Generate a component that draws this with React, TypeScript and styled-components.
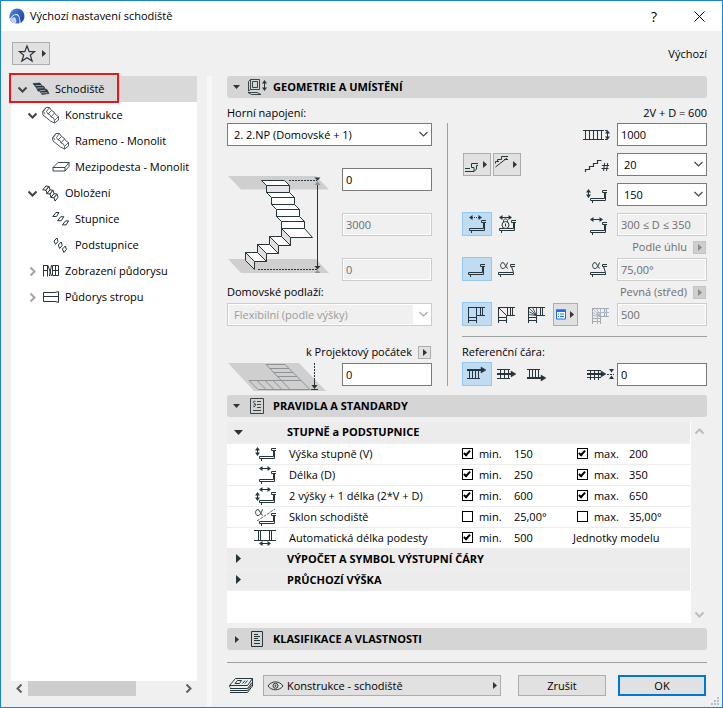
import React from "react";
import styled, { createGlobalStyle, css } from "styled-components";

const ink = "#26343b";
const font = '"Open Sans", "Noto Sans", sans-serif';

const GlobalStyle = createGlobalStyle`
  *, *::before, *::after { box-sizing: border-box; }
  body { margin: 0; background: #f0f0f0; }
  body, button, input, select { font-family: ${font}; font-size: 11px; color: #000; }
`;

/* ---------- window ---------- */

const Window = styled.div`
  display: flex;
  flex-direction: column;
  min-height: 100vh;
  border: 1px solid #1883d7;
  background: #f0f0f0;
  line-height: 16px;
`;

const TitleBar = styled.header`
  display: flex;
  align-items: center;
  height: 30px;
  padding: 0 8px;
  background: #fff;
`;

const Title = styled.h1`
  flex: 1;
  margin: 0 0 0 5px;
  font-size: 11px;
  font-weight: 400;
`;

const TitleButton = styled.button`
  display: grid;
  place-items: center;
  width: 60px;
  height: 28px;
  padding: 0;
  border: 0;
  background: none;
  font-size: 14px;
  &:last-child { width: 30px; }
`;

const Toolbar = styled.div`
  display: flex;
  align-items: center;
  justify-content: space-between;
  height: 45px;
  padding: 0 15px 0 11px;
`;

const FlatButton = styled.button<{ $w?: number; $h?: number; $tight?: boolean }>`
  display: flex;
  flex: none;
  align-items: center;
  justify-content: ${(p) => (p.$tight ? "center" : "space-between")};
  width: ${(p) => p.$w ?? 28}px;
  height: ${(p) => p.$h ?? 23}px;
  padding: ${(p) => (p.$tight ? "0" : "0 3px 0 0")};
  border: 1px solid #adadad;
  background: #e1e1e1;
  svg { flex: none; }
  &:disabled { background: #cfcfcf; border-color: #c4c4c4; }
`;

const Columns = styled.div`
  display: flex;
  flex: 1;
  padding: 0 15px 0 10px;
`;

/* ---------- tree ---------- */

const TreePane = styled.nav`
  position: relative;
  display: flex;
  flex: none;
  flex-direction: column;
  width: 186px;
  margin-bottom: 11px;
`;

const Tree = styled.ul`
  flex: 1;
  margin: 0;
  padding: 0;
  list-style: none;
  background: #fff;
`;

const TreeRow = styled.li<{ $level: number; $selected?: boolean }>`
  display: grid;
  grid-template-columns: 9px 18px 1fr;
  column-gap: 5px;
  align-items: center;
  height: 26px;
  padding-left: ${(p) => 7 + p.$level * 10}px;
  white-space: nowrap;
  background: ${(p) => (p.$selected ? "#d9d9d9" : "transparent")};
`;

const Highlight = styled.div`
  position: absolute;
  left: -2px;
  top: -3px;
  width: 110px;
  height: 30px;
  border: 2px solid #f01418;
  pointer-events: none;
`;

const HScroll = styled.div`
  display: grid;
  grid-template-columns: 17px 1fr 17px;
  align-items: center;
  justify-items: center;
  height: 15px;
`;

const HThumb = styled.div`
  justify-self: start;
  width: 71%;
  height: 15px;
  background: #cdcdcd;
`;

const Splitter = styled.div`
  flex: none;
  width: 5px;
  margin: 0 15px 0 10px;
  background: #f7f7f7;
`;

/* ---------- settings ---------- */

const Main = styled.main`
  display: flex;
  flex: 1;
  flex-direction: column;
  min-width: 0;
`;

const SectionHead = styled.h2`
  display: grid;
  grid-template-columns: 9px 22px 1fr;
  column-gap: 5px;
  align-items: center;
  justify-items: center;
  height: 22px;
  margin: 0;
  padding-left: 5px;
  border-radius: 3px;
  background: #d5d5d5;
  font-size: 11px;
  font-weight: 700;
  span { justify-self: start; }
`;

const Geometry = styled.section`
  display: grid;
  grid-template-columns: 205px 1fr;
  column-gap: 30px;
  padding: 4px 0 9px;
`;

const Column = styled.div`
  display: flex;
  flex-direction: column;
  min-width: 0;
`;

const DividedColumn = styled(Column)`
  position: relative;
  &::before {
    content: "";
    position: absolute;
    left: -15px;
    top: 21px;
    bottom: 0;
    width: 1px;
    background: #a0a0a0;
  }
`;

const Caption = styled.div<{ $end?: boolean; $muted?: boolean }>`
  display: flex;
  align-items: center;
  justify-content: ${(p) => (p.$end ? "flex-end" : "flex-start")};
  gap: 6px;
  height: 22px;
  padding-right: ${(p) => (p.$end ? 1 : 0)}px;
  color: ${(p) => (p.$muted ? "#6d6d6d" : "#000")};
`;

const TopCaption = styled(Caption)`
  height: 21px;
  padding-right: 0;
`;

const boxed = css`
  width: 100%;
  height: 23px;
  border: 1px solid #7a7a7a;
  border-radius: 0;
  background: #fff;
  line-height: 16px;
  &:disabled {
    border-color: #ccc;
    background: #f0f0f0;
    box-shadow: inset 0 0 0 1px #fff;
    color: #6d6d6d;
    opacity: 1;
  }
`;

const Field = styled.input`
  ${boxed}
  padding: 0 3px;
`;

const SelectBox = styled.div`
  position: relative;
  width: 100%;
  svg { position: absolute; right: 4px; top: 8px; pointer-events: none; }
`;

const SelectField = styled.select`
  ${boxed}
  appearance: none;
  padding: 0 22px 0 6px;
  &:disabled {
    color: #9a9a9a;
    background: linear-gradient(to right, #f0f0f0 calc(100% - 18px), #fff 0);
  }
`;

const Row = styled.div<{ $gap?: boolean }>`
  display: flex;
  align-items: flex-end;
  height: 23px;
  margin-top: ${(p) => (p.$gap ? 7 : 0)}px;
`;

const IconCell = styled.span`
  display: flex;
  flex: none;
  margin: 0 2px 0 auto;
`;

const Slot = styled.div`
  flex: none;
  width: 90px;
`;

const Toggle = styled.button<{ $on?: boolean }>`
  display: grid;
  flex: none;
  place-items: center;
  width: 30px;
  height: 24px;
  padding: 0;
  border: 1px solid ${(p) => (p.$on ? "#92c8f2" : "transparent")};
  background: ${(p) => (p.$on ? "#c0dcf3" : "transparent")};
  svg { margin: -1px; }
`;

const Flyouts = styled.div`
  display: flex;
  gap: 2px;
  padding-left: 1px;
`;

const Heights = styled.div`
  display: grid;
  grid-template-columns: 1fr 90px;
  align-items: center;
  margin-top: 22px;
`;

const Stack = styled.div`
  display: grid;
  gap: 22px;
`;

const OriginCaption = styled(Caption)`
  margin-top: 15px;
`;

const OriginRow = styled.div`
  display: grid;
  grid-template-columns: 1fr 90px;
  height: 23px;
`;

const Rule = styled.hr<{ $margin: string }>`
  width: 100%;
  height: 1px;
  margin: ${(p) => p.$margin};
  border: 0;
  background: #a0a0a0;
`;

/* ---------- rules table ---------- */

const RulesBox = styled.div`
  display: flex;
  height: 201px;
  margin: 5px 0;
`;

const TableArea = styled.div`
  flex: 1;
  min-width: 0;
  padding-right: 1px;
  background: #fff;
`;

const Rules = styled.table`
  width: 100%;
  border-collapse: collapse;
  table-layout: fixed;
  tr { height: 21px; }
  td, th { padding: 0; white-space: nowrap; text-align: left; line-height: 16px; border-bottom: 1px solid #ececec; }
  td > svg { display: block; }
`;

const GroupRow = styled.tr`
  background: #ececec;
  th { font-weight: 700; border-bottom-color: #f0f0f0; }
  svg { margin: 0 auto; display: block; }
`;

const CheckLabel = styled.label<{ $indent?: boolean }>`
  display: flex;
  align-items: center;
  gap: 6px;
  padding-left: ${(p) => (p.$indent ? 4 : 0)}px;
`;

const Cell = styled.td<{ $indent: number }>`
  && { padding-left: ${(p) => p.$indent}px; }
`;

const Check = styled.input`
  appearance: none;
  display: grid;
  place-items: center;
  width: 11px;
  height: 11px;
  margin: 0;
  border: 1px solid #000;
  background: #fff;
  &:checked::after {
    content: "";
    width: 4px;
    height: 7px;
    margin-bottom: 2px;
    border: solid #000;
    border-width: 0 2px 2px 0;
    transform: rotate(42deg);
  }
`;

const VScroll = styled.div`
  display: flex;
  flex: none;
  flex-direction: column;
  align-items: center;
  justify-content: space-between;
  width: 16px;
  padding: 5px 0 4px;
`;

/* ---------- footer ---------- */

const Footer = styled.footer`
  display: flex;
  align-items: center;
  margin-bottom: 11px;
`;

const LayerButton = styled.button`
  display: flex;
  flex: 1;
  align-items: center;
  gap: 3px;
  height: 21px;
  margin: 0 17px 0 9px;
  padding: 0 3px 0 3px;
  border: 1px solid #adadad;
  background: #e1e1e1;
  line-height: 16px;
  span { flex: 1; text-align: left; }
`;

const PushButton = styled.button<{ $primary?: boolean }>`
  width: 88px;
  height: 21px;
  padding: 0;
  margin-right: ${(p) => (p.$primary ? 1 : 12)}px;
  border: ${(p) => (p.$primary ? "2px solid #0078d7" : "1px solid #adadad")};
  background: #e1e1e1;
  line-height: 16px;
`;

const Grip = styled.svg`
  position: fixed;
  right: 4px;
  bottom: 3px;
`;

/* ---------- drawings ---------- */

type Kids = { children?: React.ReactNode };

const Svg = ({ w, h, children, color = ink }: Kids & { w: number; h: number; color?: string }) => (
  <svg width={w} height={h} viewBox={`0 0 ${w} ${h}`} fill="none" stroke={color} aria-hidden="true">
    {children}
  </svg>
);

const Chevron = ({ dir, color = "#444" }: { dir: "up" | "down" | "right" | "left"; color?: string }) => {
  const d = {
    down: "M0.5 2.5L4.5 6.5L8.5 2.5",
    up: "M0.5 6.5L4.5 2.5L8.5 6.5",
    right: "M2.5 0.5L6.5 4.5L2.5 8.5",
    left: "M6.5 0.5L2.5 4.5L6.5 8.5",
  }[dir];
  return (
    <Svg w={9} h={9} color={color}>
      <path d={d} strokeWidth="2" />
    </Svg>
  );
};

const SelectChevron = ({ color = "#444" }: { color?: string }) => (
  <Svg w={9} h={7} color={color}>
    <path d="M0.5 1L4.5 5L8.5 1" strokeWidth="1.2" />
  </Svg>
);

const Tri = ({ dir = "right", color = "#333", big }: { dir?: "right" | "down"; color?: string; big?: boolean }) => {
  const long = big ? 9 : 7;
  const short = big ? 5 : 4;
  const [w, h] = dir === "right" ? [short, long] : [long, short];
  return (
    <svg width={w} height={h} viewBox={`0 0 ${w} ${h}`} fill={color} aria-hidden="true">
      <path d={dir === "right" ? `M0 0V${h}L${w} ${h / 2}Z` : `M0 0H${w}L${w / 2} ${h}Z`} />
    </svg>
  );
};

const Step = ({ x, y, tilt }: { x: number; y: number; tilt?: boolean }) => (
  <g transform={`translate(${x} ${y})`}>
    <path d="M17 0.5H12.5V2.5H17" />
    {tilt ? <path d="M13.5 2.5L15.5 8.5V10.5H0.5V8.5H15" /> : <path d="M15.5 2.5V10.5H0.5V8.5H14.5V2.5" />}
    <path d="M2.5 10.5V13" />
  </g>
);

const HArrow = ({ x, y, len, dashed }: { x: number; y: number; len: number; dashed?: boolean }) => (
  <g transform={`translate(${x} ${y})`}>
    <path d={`M3 2.5H${len - 3}`} strokeDasharray={dashed ? "1 1" : undefined} />
    <path d={`M0 2.5L3.5 0V5ZM${len} 2.5L${len - 3.5} 0V5Z`} fill={ink} stroke="none" />
  </g>
);

const VArrow = ({ x, y, len }: { x: number; y: number; len: number }) => (
  <g transform={`translate(${x} ${y})`}>
    <path d={`M2.5 3V${len - 3}`} />
    <path d={`M2.5 0L0 3.5H5ZM2.5 ${len}L0 ${len - 3.5}H5Z`} fill={ink} stroke="none" />
  </g>
);

const Alpha = ({ x, y }: { x: number; y: number }) => (
  <path transform={`translate(${x} ${y})`} d="M7.5 0.5C6 5 4.5 6.5 3 6.5C1.2 6.5 0.6 5 0.6 3.5C0.6 2 1.3 0.6 3 0.6C5 0.6 5.5 6.3 7.8 6.3" />
);

const HeadArrow = ({ x, y }: { x: number; y: number }) => (
  <path d={`M${x} ${y - 3}L${x + 5} ${y}L${x} ${y + 3}Z`} fill={ink} stroke={ink} strokeWidth="0.5" />
);

const Corner = ({ kind }: { kind: "landing" | "diagonal" | "fan" | "faded" }) => (
  <Svg w={30} h={24} color={kind === "faded" ? "#a6a9ab" : ink}>
    <path d="M6 5.5H23M6.5 5V21M14.5 15.5V21M14.5 13.5H23M18.5 5.5V13.500M20.500 5.500V13.500M6.500 15.500H14.500M6.500 18.500H14.500M14.500 13.500V16" />
    {kind === "landing" && <path d="M14.500 5.500V13.500" />}
    {kind === "diagonal" && <path d="M6.500 5.500L14.500 13.500M15.500 5.500V13.500" />}
    {(kind === "fan" || kind === "faded") && (
      <path d="M6.500 5.500L14.500 13.500M10.500 5.500L14.500 13.500M14.500 5.500V13.500M6.500 9.500L14.500 13.500M6.500 12.500L14.500 13.500" strokeWidth="0.8" />
    )}
    {kind === "faded" && <path d="M11.500 21V9.500H23" stroke="#9fb8e8" />}
  </Svg>
);

const Logo = () => (
  <svg width="16" height="16" viewBox="0 0 16 16" aria-hidden="true">
    <defs>
      <linearGradient id="logo" x1="0" y1="0" x2="1" y2="1">
        <stop offset="0" stopColor="#5b95e0" />
        <stop offset="0.5" stopColor="#2f5fbe" />
        <stop offset="1" stopColor="#1f3f92" />
      </linearGradient>
    </defs>
    <path d="M0.5 11C0 5 3 0.6 8.200 0.500C13 0.600 16 4.500 15.400 9.500C15 12 13.500 14 11.500 15C11.500 10 10 6 7.500 6C4.500 6 2.500 8.500 0.500 11Z" fill="url(#logo)" />
    <path d="M1 11.800C3 8.500 5 6.900 7.200 7C10 7.300 10.900 11.500 10.500 15.300C6.500 16 2.500 15 1 11.800Z" fill="#3d6cc8" />
    <path d="M1 11.800C2.500 9.500 4.500 8.600 6 9.500C7.500 10.500 7.500 13.500 7 15.600C4 15.300 2 14 1 11.800Z" fill="#c3d1ea" />
  </svg>
);

const repeat = (n: number, dx: number, dy: number, d: string, fill: string) =>
  Array.from({ length: n }, (_, i) => <path key={i} transform={`translate(${i * dx} ${i * dy})`} d={d} fill={fill} />);

const StairIcon = () => (
  <Svg w={18} h={14}>
    <path d="M1 1.500L8 1L10 4L12 4.500L13 7L15 7.500L17 11.500L10 12.500L8 9.500L6 9L4.500 6Z" fill={ink} strokeWidth="0.6" />
    <path d="M3.500 3.500L9 3.500M5 6L11.500 5.800M7.500 8.800L13.500 8.200M9 10.800H15.500" stroke="#d9d9d9" strokeWidth="0.7" />
  </Svg>
);

const ConcreteIcon = () => (
  <Svg w={18} h={18} color="#4a555b">
    <path d="M0.5 5.500L4 1.500H7.500L9.500 4.500L12 6L13.500 8.500L16.500 10.500V14L12.500 17L8.500 15L1 9Z" fill="#fff" />
    <path d="M7.500 1.500L4.500 5.500L6 8L9.500 4.500M6 8L8 8.500L9 11L12.500 7M9 11L11.500 12L12.500 14.500L16.500 10.500M12.500 14.500V17M4 1.500L1.500 5.500L3 8" strokeWidth="0.9" />
  </Svg>
);

const SlabIcon = () => (
  <Svg w={18} h={16}>
    <path d="M1 8.500L6 3.500H17L13 8.500ZM1 8.500V12H13V8.500M13 12L17 7.500V3.500" strokeWidth="0.9" />
  </Svg>
);

const CladdingIcon = () => (
  <Svg w={18} h={17}>
    {repeat(3, 4, 3.8, "M0.700 4.800L4 1L7 1.500L4 5.200Z", "#fff")}
    {repeat(3, 4, 3.8, "M4 5.200L7 1.500L8 4.800L5 8.500Z", "#fff")}
  </Svg>
);

const TreadsIcon = () => <Svg w={18} h={16}>{repeat(3, 4.8, 4.2, "M0.800 5.500L4 1.500H7L4.500 5.500Z", "none")}</Svg>;

const RisersIcon = () => <Svg w={18} h={17}>{repeat(3, 4.2, 4, "M2 4L5 1L6 4.500L3.500 7.500Z", "none")}</Svg>;

const PlanIcon = () => (
  <Svg w={18} h={14}>
    <path d="M1.500 1V12.500M5.500 1V12.500M1 6.500H6M6 1.500L9.500 12M9.500 1L7.500 12M10.500 1.500H16.500V11.500H10.500ZM13.500 1V12M10.500 6.500H16.500M1.500 1.500H5.500" />
  </Svg>
);

const CeilingIcon = () => (
  <Svg w={18} h={14}>
    <path d="M1.500 2.500H13L16.500 1.500V12.500L13 11.500H1.500ZM1.500 6.500H16" />
  </Svg>
);

const StairDiagram = () => (
  <svg width="103" height="100" viewBox="0 0 103 100" fill="#fff" stroke={ink} strokeLinejoin="round" aria-hidden="true">
    <path d="M1 1H89L102 14.500H14Z" fill="#cfcfcf" stroke="none" />
    <path d="M1 84H89L102 98H14Z" fill="#cfcfcf" stroke="none" />
    <path d="M34.500 5.500H57.500L62.500 10.500H39.500Z" />
    <path d="M39.500 10.500H62.500V17.500H39.500Z" fill="#e6e4ec" />
    <path d="M39.500 17.500H62.500L67.500 22.500H44.500Z" />
    <path d="M44.500 22.500H67.500V29.500H44.500Z" />
    <path d="M44.500 29.500H67.500L72.500 34.500H49.500Z" />
    <path d="M49.500 34.500H72.500V41.500H49.500Z" />
    <path d="M49.500 41.500H72.500L77.500 46.500H54.500Z" />
    <path d="M54.500 46.500H77.500V53.500H54.500Z" />
    <path d="M54.500 53.500H77.500L85.500 62.500H63.500Z" />
    <path d="M42.500 61.500H54.500L63.500 70.500H51.500ZM30.500 69.500H42.500L51.500 78.500H39.500ZM18.500 77.500H30.500L39.500 86.500H27.500Z" />
    <path d="M54.500 53.500V61.500L63.500 70.500V62.500ZM42.500 61.500V69.500L51.500 78.500V70.500ZM30.500 69.500V77.500L39.500 86.500V78.500ZM18.500 77.500V85.500L27.500 94.500V86.500Z" fill="#e0e0e0" />
    <path d="M62 5.500H90M31 94.500H90" strokeDasharray="2 1" fill="none" />
    <path d="M90.500 9V92" />
    <path d="M87.500 2.500H93.500L90.500 5.500ZM87.500 91H93.500L90.500 94.500Z" fill={ink} stroke="none" />
    <path d="M87.500 10H93.500L90.500 6ZM87.500 98H93.500L90.500 95Z" fill="#8d9296" stroke="none" />
  </svg>
);

const OriginDiagram = () => (
  <svg width="103" height="28" viewBox="0 0 103 28" fill="none" stroke="#8d9296" aria-hidden="true">
    <path d="M1 0H72L99 28H27Z" fill="#cfcfcf" stroke="none" />
    <path d="M39 1.500H58L83 26.500H31L22 17.500H74M39 1.500L63 26.500M43 5.500H62M47 9.500H66M51 13.500H70" />
    <path d="M30 17.500L39 26.500M38 17.500L47 26.500M46 17.500L55 26.500" />
    <path d="M87.500 0V15" stroke={ink} strokeDasharray="2 1" />
    <path d="M87.500 15V24M84 26.500H91" stroke={ink} />
    <path d="M84.500 22H90.500L87.500 26Z" fill={ink} stroke="none" />
  </svg>
);

const WidthIcon = () => (
  <Svg w={32} h={22}>
    <path d="M0 6.500H19M0 15.500H19M2.500 6V16M6.500 6V16M10.500 6V16M14.500 6V16M18.500 6V16" />
    <path d="M19 6.500H24M19 15.500H24" strokeDasharray="2 1" />
    <VArrow x={22} y={6} len={10} />
  </Svg>
);

const CountIcon = () => (
  <Svg w={32} h={22}>
    <path d="M2.500 18V15.500H6.500V12.500H10.500V9.500H14.500V6.500H18.500" strokeWidth="1.200" />
    <path d="M20.500 17L21.700 9M23.500 17L24.700 9M19 11.500H26M18.500 14.500H25.500" />
  </Svg>
);

const HeightIcon = () => (
  <Svg w={32} h={22}>
    <VArrow x={3} y={5} len={9} />
    <Step x={7} y={6} />
  </Svg>
);

const DepthIcon = () => (
  <Svg w={32} h={22}>
    <HArrow x={7} y={3} len={13} />
    <Step x={7} y={8} />
  </Svg>
);

const AngleIcon = () => (
  <Svg w={32} h={22}>
    <Alpha x={9} y={3} />
    <Step x={7} y={5} tilt />
  </Svg>
);

const FadedCorner = () => (
  <svg width="32" height="22" viewBox="-3 1 32 22" fill="none" aria-hidden="true">
    <Corner kind="faded" />
  </svg>
);

const OffsetIcon = () => (
  <Svg w={32} h={22}>
    <path d="M4 6.500H18M4 13.500H18M7.500 6V16M11.500 6V16M15.500 6V16" />
    <path d="M4 10H18" strokeWidth="2" />
    <HeadArrow x={18} y={10} />
    <path d="M24 10.500H31" strokeDasharray="2 1" />
    <path d="M26 5H31L28.500 8.500ZM26 15H31L28.500 11.500Z" fill={ink} stroke="none" />
  </Svg>
);

const RefIcon = ({ pos }: { pos: "top" | "mid" | "bottom" }) => (
  <Svg w={30} h={24}>
    {pos === "top" && (
      <>
        <path d="M5 16.500H18M7.500 8V16M10.500 8V16M13.500 8V16M16.500 8V16" />
        <path d="M5 8H20" strokeWidth="2" />
        <HeadArrow x={19} y={8} />
      </>
    )}
    {pos === "mid" && (
      <>
        <path d="M5 7.500H18M5 16.500H18M8.500 7V17M12.500 7V17M16.500 7V17" />
        <path d="M5 12H20" strokeWidth="2" />
        <HeadArrow x={19} y={12} />
      </>
    )}
    {pos === "bottom" && (
      <>
        <path d="M5 7.500H18M7.500 7V16M10.500 7V16M13.500 7V16M16.500 7V16" />
        <path d="M5 16H20" strokeWidth="2" />
        <HeadArrow x={19} y={16} />
      </>
    )}
  </Svg>
);

/* ---------- data ---------- */

type TreeItem = { label: string; level: number; state?: "open" | "closed"; icon: React.ReactNode };

const tree: TreeItem[] = [
  { label: "Schodiště", level: 0, state: "open", icon: <StairIcon /> },
  { label: "Konstrukce", level: 1, state: "open", icon: <ConcreteIcon /> },
  { label: "Rameno - Monolit", level: 2, icon: <ConcreteIcon /> },
  { label: "Mezipodesta - Monolit", level: 2, icon: <SlabIcon /> },
  { label: "Obložení", level: 1, state: "open", icon: <CladdingIcon /> },
  { label: "Stupnice", level: 2, icon: <TreadsIcon /> },
  { label: "Podstupnice", level: 2, icon: <RisersIcon /> },
  { label: "Zobrazení půdorysu", level: 1, state: "closed", icon: <PlanIcon /> },
  { label: "Půdorys stropu", level: 1, state: "closed", icon: <CeilingIcon /> },
];

type RuleItem = { label: string; icon: React.ReactNode; on: boolean; min: string; max?: string };

const rules: RuleItem[] = [
  { label: "Výška stupně (V)", on: true, min: "150", max: "200", icon: <Svg w={22} h={16}><VArrow x={1} y={1} len={9} /><Step x={5} y={2} /></Svg> },
  { label: "Délka (D)", on: true, min: "250", max: "350", icon: <Svg w={22} h={18}><HArrow x={5} y={0} len={12} /><Step x={5} y={5} /></Svg> },
  { label: "2 výšky + 1 délka (2*V + D)", on: true, min: "600", max: "650", icon: <Svg w={22} h={18}><HArrow x={5} y={0} len={12} /><VArrow x={1} y={5} len={9} /><Step x={5} y={5} /></Svg> },
  { label: "Sklon schodiště", on: false, min: "25,00°", max: "35,00°", icon: <Svg w={22} h={18}><Alpha x={1} y={1} /><path d="M3 13L21 1" strokeDasharray="3 1" strokeWidth="0.8" /><Step x={5} y={5} /></Svg> },
  { label: "Automatická délka podesty", on: true, min: "500", icon: <Svg w={22} h={17}><path d="M0 1.500H22M0 11.500H22M4.500 1V12M6.500 1V12M15.500 1V12M17.500 1V12" /><HArrow x={5} y={12} len={12} /></Svg> },
];

export default function App() {
  return (
    <>
      <GlobalStyle />
      <Window>
        <TitleBar>
          <Logo />
          <Title>Výchozí nastavení schodiště</Title>
          <TitleButton aria-label="Nápověda">?</TitleButton>
          <TitleButton aria-label="Zavřít">
            <Svg w={11} h={11} color="#000"><path d="M0.500 0.500L10.500 10.500M10.500 0.500L0.500 10.500" /></Svg>
          </TitleButton>
        </TitleBar>

        <Toolbar>
          <FlatButton $w={38} aria-label="Oblíbené">
            <Svg w={28} h={21}><path d="M14 3L16.200 8.700H21.500L17.300 12.300L19.100 18L14 14.700L8.900 18L10.700 12.300L6.500 8.700H11.800Z" strokeWidth="1.200" /></Svg>
            <Tri />
          </FlatButton>
          <Caption>Výchozí</Caption>
        </Toolbar>

        <Columns>
          <TreePane aria-label="Stránky nastavení">
            <Tree>
              {tree.map((t, i) => (
                <TreeRow key={t.label} $level={t.level} $selected={i === 0}>
                  {t.state ? <Chevron dir={t.state === "open" ? "down" : "right"} color={t.state === "open" ? "#444" : "#a3a3a3"} /> : <i />}
                  {t.icon}
                  <span>{t.label}</span>
                </TreeRow>
              ))}
            </Tree>
            <HScroll>
              <Chevron dir="left" color="#606060" />
              <HThumb />
              <Chevron dir="right" color="#606060" />
            </HScroll>
            <Highlight />
          </TreePane>
          <Splitter />

          <Main>
            <SectionHead>
              <Tri dir="down" />
              <Svg w={20} h={18}><path d="M3.500 1.500H12.500V11.500H3.500ZM3.500 1.500L1.500 3.500V13L3.500 11.500M5.500 3.500H10.500V9.500H5.500ZM1 14.500H10L14 16.500H4.500Z" strokeWidth="0.9" /><VArrow x={15} y={2} len={11} /></Svg>
              <span>GEOMETRIE A UMÍSTĚNÍ</span>
            </SectionHead>

            <Geometry>
              <Column>
                <TopCaption as="label" htmlFor="top-link">Horní napojení:</TopCaption>
                <SelectBox>
                  <SelectField id="top-link"><option>2. 2.NP (Domovské + 1)</option></SelectField>
                  <SelectChevron />
                </SelectBox>
                <Heights>
                  <StairDiagram />
                  <Stack>
                    <Field aria-label="Horní odsazení" defaultValue="0" />
                    <Field aria-label="Výška schodiště" defaultValue="3000" disabled />
                    <Field aria-label="Dolní odsazení" defaultValue="0" disabled />
                  </Stack>
                </Heights>
                <Caption as="label" htmlFor="home-storey">Domovské podlaží:</Caption>
                <SelectBox>
                  <SelectField id="home-storey" disabled><option>Flexibilní (podle výšky)</option></SelectField>
                  <SelectChevron color="#a8a8a8" />
                </SelectBox>
                <OriginCaption $end>
                  <label htmlFor="origin">k Projektový počátek</label>
                  <FlatButton $w={13} $h={13} $tight aria-label="Zvolit počátek"><Tri /></FlatButton>
                </OriginCaption>
                <OriginRow>
                  <OriginDiagram />
                  <Field id="origin" defaultValue="0" />
                </OriginRow>
              </Column>

              <DividedColumn>
                <TopCaption $end>2V + D = 600</TopCaption>
                <Row>
                  <IconCell><WidthIcon /></IconCell>
                  <Slot><Field aria-label="Šířka" defaultValue="1000" /></Slot>
                </Row>
                <Row $gap>
                  <Flyouts>
                    <FlatButton aria-label="Dolní napojení">
                      <Svg w={18} h={21}><path d="M1 14.500H6M1 17.500H10V13.500H7.500V9.500H14M10 17.500L12.500 15V11.500H14" /></Svg>
                      <Tri />
                    </FlatButton>
                    <FlatButton aria-label="Horní zakončení">
                      <Svg w={18} h={21}><path d="M1.500 13L13 4M3.500 7.500V5.500H7.500V2.500H14M10 5.500H14M1.500 9.500V7.500H5" /></Svg>
                      <Tri />
                    </FlatButton>
                  </Flyouts>
                  <IconCell><CountIcon /></IconCell>
                  <Slot><SelectBox><SelectField aria-label="Počet stupňů"><option>20</option></SelectField><SelectChevron /></SelectBox></Slot>
                </Row>
                <Row $gap>
                  <IconCell><HeightIcon /></IconCell>
                  <Slot><SelectBox><SelectField aria-label="Výška stupně"><option>150</option></SelectField><SelectChevron /></SelectBox></Slot>
                </Row>
                <Row $gap>
                  <Toggle $on aria-label="Volná délka"><Svg w={30} h={24}><HArrow x={7} y={3} len={13} dashed /><Step x={7} y={8} /></Svg></Toggle>
                  <Toggle aria-label="Zamknout délku">
                    <Svg w={30} h={24}><HArrow x={7} y={3} len={13} /><Step x={7} y={8} /><circle cx="13.500" cy="13" r="3.500" fill="#f0f0f0" /><path d="M11.500 10V8.500C11.500 6.500 15.500 6.500 15.500 8.500V10M13.500 11.500V14.500" /></Svg>
                  </Toggle>
                  <IconCell><DepthIcon /></IconCell>
                  <Slot><Field aria-label="Délka stupně" defaultValue="300 ≤ D ≤ 350" disabled /></Slot>
                </Row>
                <Caption $end $muted>
                  Podle úhlu
                  <FlatButton $w={13} $h={13} $tight disabled aria-label="Podle úhlu"><Tri color="#8c8c8c" /></FlatButton>
                </Caption>
                <Row>
                  <Toggle $on aria-label="Kolmá podstupnice"><Svg w={30} h={24}><Step x={6} y={7} /></Svg></Toggle>
                  <Toggle aria-label="Šikmá podstupnice"><Svg w={30} h={24}><Alpha x={8} y={5} /><Step x={6} y={7} tilt /></Svg></Toggle>
                  <IconCell><AngleIcon /></IconCell>
                  <Slot><Field aria-label="Úhel" defaultValue="75,00°" disabled /></Slot>
                </Row>
                <Caption $end $muted>
                  Pevná (střed)
                  <FlatButton $w={13} $h={13} $tight disabled aria-label="Pevná (střed)"><Tri color="#8c8c8c" /></FlatButton>
                </Caption>
                <Row>
                  <Toggle $on aria-label="Podesta"><Corner kind="landing" /></Toggle>
                  <Toggle aria-label="Dělená podesta"><Corner kind="diagonal" /></Toggle>
                  <Toggle aria-label="Kosé stupně"><Corner kind="fan" /></Toggle>
                  <Flyouts>
                    <FlatButton $w={25} aria-label="Nastavení zalomení">
                      <svg width="13" height="11" viewBox="0 0 13 11" aria-hidden="true">
                        <path d="M2.500 1H11.500V10H2.500Z" fill="#fff" stroke="#1f6ff0" />
                        <path d="M2 0.500H12V3H2ZM4 4.500H5V5.500H4ZM6 4.500H10V5.500H6ZM4 7H5V8H4ZM6 7H10V8H6Z" fill="#1f6ff0" />
                      </svg>
                      <Tri />
                    </FlatButton>
                  </Flyouts>
                  <IconCell><FadedCorner /></IconCell>
                  <Slot><Field aria-label="Vzdálenost" defaultValue="500" disabled /></Slot>
                </Row>
                <Rule $margin="10px 0 4px" />
                <Caption as="label" htmlFor="ref-offset">Referenční čára:</Caption>
                <Row>
                  <Toggle $on aria-label="Vlevo"><RefIcon pos="top" /></Toggle>
                  <Toggle aria-label="Střed"><RefIcon pos="mid" /></Toggle>
                  <Toggle aria-label="Vpravo"><RefIcon pos="bottom" /></Toggle>
                  <IconCell><OffsetIcon /></IconCell>
                  <Slot><Field id="ref-offset" defaultValue="0" /></Slot>
                </Row>
              </DividedColumn>
            </Geometry>

            <SectionHead>
              <Tri dir="down" />
              <Svg w={16} h={18}><path d="M1.500 1.500H14.500V16.500H1.500ZM8 4.500H12M8 7.500H12M8 10.500H12M4 13.500H12M6.500 4.500C4.500 3.500 3.500 5 5 6S6.500 8 4.500 8M6 6.500C7.500 8 6 10.500 4 9.500" strokeWidth="0.9" /></Svg>
              <span>PRAVIDLA A STANDARDY</span>
            </SectionHead>

            <RulesBox>
              <TableArea>
                <Rules>
                  <colgroup>
                    <col width="23" /><col width="37" /><col /><col width="52" /><col width="59" /><col width="56" /><col width="61" />
                  </colgroup>
                  <tbody>
                    <GroupRow>
                      <th><Tri dir="down" color={ink} big /></th><th /><th colSpan={5}>STUPNĚ a PODSTUPNICE</th>
                    </GroupRow>
                    {rules.map((r) => (
                      <tr key={r.label}>
                        <td />
                        <Cell $indent={4}>{r.icon}</Cell>
                        <Cell $indent={2}>{r.label}</Cell>
                        <td><CheckLabel><Check type="checkbox" defaultChecked={r.on} />min.</CheckLabel></td>
                        <td>{r.min}</td>
                        {r.max ? (
                          <>
                            <td><CheckLabel $indent><Check type="checkbox" defaultChecked={r.on} />max.</CheckLabel></td>
                            <td>{r.max}</td>
                          </>
                        ) : (
                          <td colSpan={2}>Jednotky modelu</td>
                        )}
                      </tr>
                    ))}
                    {["VÝPOČET A SYMBOL VÝSTUPNÍ ČÁRY", "PRŮCHOZÍ VÝŠKA"].map((g) => (
                      <GroupRow key={g}>
                        <th><Tri color={ink} big /></th><th /><th colSpan={5}>{g}</th>
                      </GroupRow>
                    ))}
                  </tbody>
                </Rules>
              </TableArea>
              <VScroll>
                <Chevron dir="up" color="#bdbdbd" />
                <Chevron dir="down" color="#bdbdbd" />
              </VScroll>
            </RulesBox>

            <SectionHead>
              <Tri />
              <Svg w={14} h={16}><path d="M1.500 0.500H12.500V15.500H1.500ZM4 3.500H8M4 5.500H10M4 7.500H8M4 9.500H10M4 12.500H10" /></Svg>
              <span>KLASIFIKACE A VLASTNOSTI</span>
            </SectionHead>

            <Rule $margin="12px 0" />

            <Footer>
              <Svg w={27} h={17}>
                <path d="M2.500 8.500L8.500 1.500H25.500L20.500 8.500ZM2.500 8.500V9.500M3 11.500H20.500L25 5.500M3 13.500H20.500L25 7.500M3 15.500H20.500L25 9.500M3 9.500V10.500M25.500 1.500V9.500" />
                <path d="M8 6.500L10.500 3.500H14.500L12.500 6.500ZM15.500 6.500L18 3.500M18 6.500L20.500 3.500" />
              </Svg>
              <LayerButton>
                <Svg w={17} h={12}><path d="M1 6C4.500 0.500 12.500 0.500 16 6C12.500 11 4.500 11 1 6Z" /><circle cx="8.500" cy="5.800" r="2.500" /><circle cx="8.500" cy="5.800" r="0.600" /></Svg>
                <span>Konstrukce - schodiště</span>
                <Tri />
              </LayerButton>
              <PushButton>Zrušit</PushButton>
              <PushButton $primary>OK</PushButton>
            </Footer>
          </Main>
        </Columns>
        <Grip width="8" height="8" viewBox="0 0 8 8" fill="#bfbfbf" aria-hidden="true">
          <path d="M6 0H8V2H6ZM3 3H5V5H3ZM6 3H8V5H6ZM0 6H2V8H0ZM3 6H5V8H3ZM6 6H8V8H6Z" />
        </Grip>
      </Window>
    </>
  );
}
